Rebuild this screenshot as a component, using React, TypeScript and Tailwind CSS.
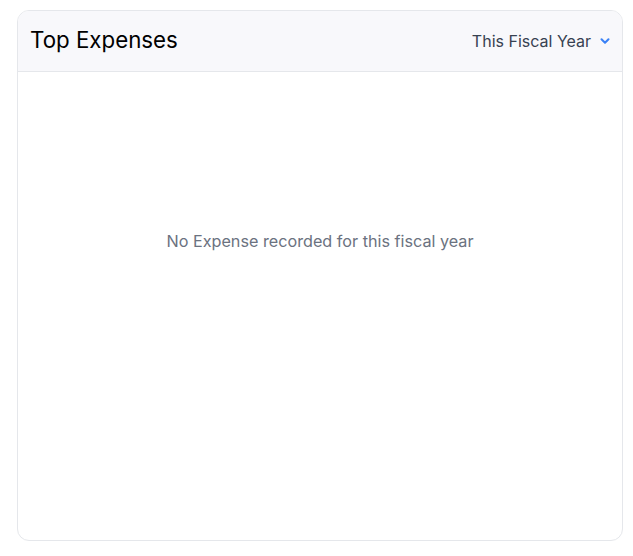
import React from 'react';
import { ChevronDown } from 'lucide-react';

const App: React.FC = () => {
  return (
    <div className="w-[633px] h-[556px] bg-white pl-[17px] pt-[10px]" style={{ fontFamily: 'Inter, "Noto Sans", sans-serif' }}>
      <div className="w-[606px] h-[531px] rounded-xl border border-[#e5e7eb] bg-white overflow-hidden flex flex-col">
        <div className="h-[61px] shrink-0 flex items-center justify-between pl-[12px] pr-[10px] bg-[#f8f8fb] border-b border-[#e5e7eb]">
          <h2 className="text-[22.3px] text-black leading-none -mt-[2px]">Top Expenses</h2>
          <button className="flex items-center gap-[7px] text-[16px] text-[#374151]">
            This Fiscal Year
            <ChevronDown className="w-[14px] h-[14px] text-[#3b82f6]" strokeWidth={3.5} />
          </button>
        </div>
        <div className="h-[338px] flex items-center justify-center">
          <p className="text-[16.2px] text-[#6b7280]">No Expense recorded for this fiscal year</p>
        </div>
      </div>
    </div>
  );
};

export default App;
